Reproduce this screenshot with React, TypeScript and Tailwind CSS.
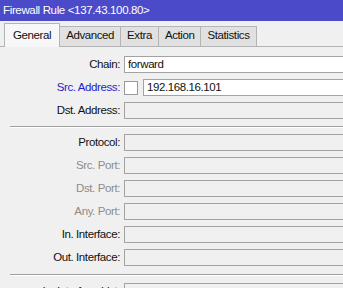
import React from 'react';

type Row = {
  label: string;
  tone?: 'normal' | 'blue' | 'muted';
  value?: string;
  white?: boolean;
  checkbox?: boolean;
};

const topRows: Row[] = [
  { label: 'Chain:', value: 'forward', white: true },
  { label: 'Src. Address:', tone: 'blue', value: '192.168.16.101', white: true, checkbox: true },
  { label: 'Dst. Address:' },
];

const midRows: Row[] = [
  { label: 'Protocol:' },
  { label: 'Src. Port:', tone: 'muted' },
  { label: 'Dst. Port:', tone: 'muted' },
  { label: 'Any. Port:', tone: 'muted' },
  { label: 'In. Interface:' },
  { label: 'Out. Interface:' },
];

const tabs = ['General', 'Advanced', 'Extra', 'Action', 'Statistics'];

function Field({ row }: { row: Row }) {
  const tone =
    row.tone === 'blue' ? 'text-[#1e1ec8]' : row.tone === 'muted' ? 'text-[#8c8c8c]' : 'text-[#111]';
  return (
    <div className="flex h-[17px] items-center">
      <div className={`w-[120px] shrink-0 text-right leading-none ${tone}`}>{row.label}</div>
      {row.checkbox && (
        <div className="ml-[4px] h-[14px] w-[14px] shrink-0 border border-[#9a9a9a] bg-white" />
      )}
      <div
        className={`${row.checkbox ? 'ml-[5px]' : 'ml-[4px]'} flex h-[17px] flex-1 items-center border border-[#a3a3a3] pl-[3px] leading-none text-[#111] ${
          row.white ? 'bg-white' : 'bg-[#f0f0f0]'
        }`}
      >
        {row.value}
      </div>
    </div>
  );
}

function Separator({ className }: { className: string }) {
  return <div className={`ml-[10px] h-[2px] border-t border-b border-t-[#a0a0a0] border-b-white ${className}`} />;
}

export default function App() {
  return (
    <div
      className="h-[288px] w-[343px] overflow-hidden bg-[#f0f0f0] text-[11.5px] tracking-[-0.4px]"
      style={{ fontFamily: '"Liberation Sans", Arial, sans-serif' }}
    >
      {/* Title bar */}
      <div className="flex h-[21px] items-center bg-[#4b4bc9] pl-[3px] text-[11.5px] tracking-[-0.35px] text-white">
        Firewall Rule &lt;137.43.100.80&gt;
      </div>

      {/* Tabs */}
      <div className="relative flex h-[26px] items-end pl-[4px]">
        <div className="absolute bottom-0 left-0 right-0 h-px bg-[#b4b4b4]" />
        {tabs.map((tab, i) =>
          i === 0 ? (
            <div
              key={tab}
              className="relative z-10 flex h-[24px] items-center border border-b-0 border-[#b4b4b4] bg-[#f7f7f7] px-[8px] text-[#111]"
            >
              {tab}
            </div>
          ) : (
            <div
              key={tab}
              className="flex h-[21px] items-center border border-l-0 border-[#b4b4b4] bg-[#e1e1e1] px-[6px] pb-px text-[#111]"
            >
              {tab}
            </div>
          )
        )}
      </div>

      {/* Form */}
      <div className="flex w-[370px] flex-col gap-[6px] pt-[9px]">
        {topRows.map((r) => (
          <Field key={r.label} row={r} />
        ))}
        <Separator className="mt-[1px]" />
        {midRows.map((r) => (
          <Field key={r.label} row={r} />
        ))}
        <Separator className="mt-[2px] mb-[1px]" />
        <Field row={{ label: 'In. Interface List:' }} />
      </div>
    </div>
  );
}
